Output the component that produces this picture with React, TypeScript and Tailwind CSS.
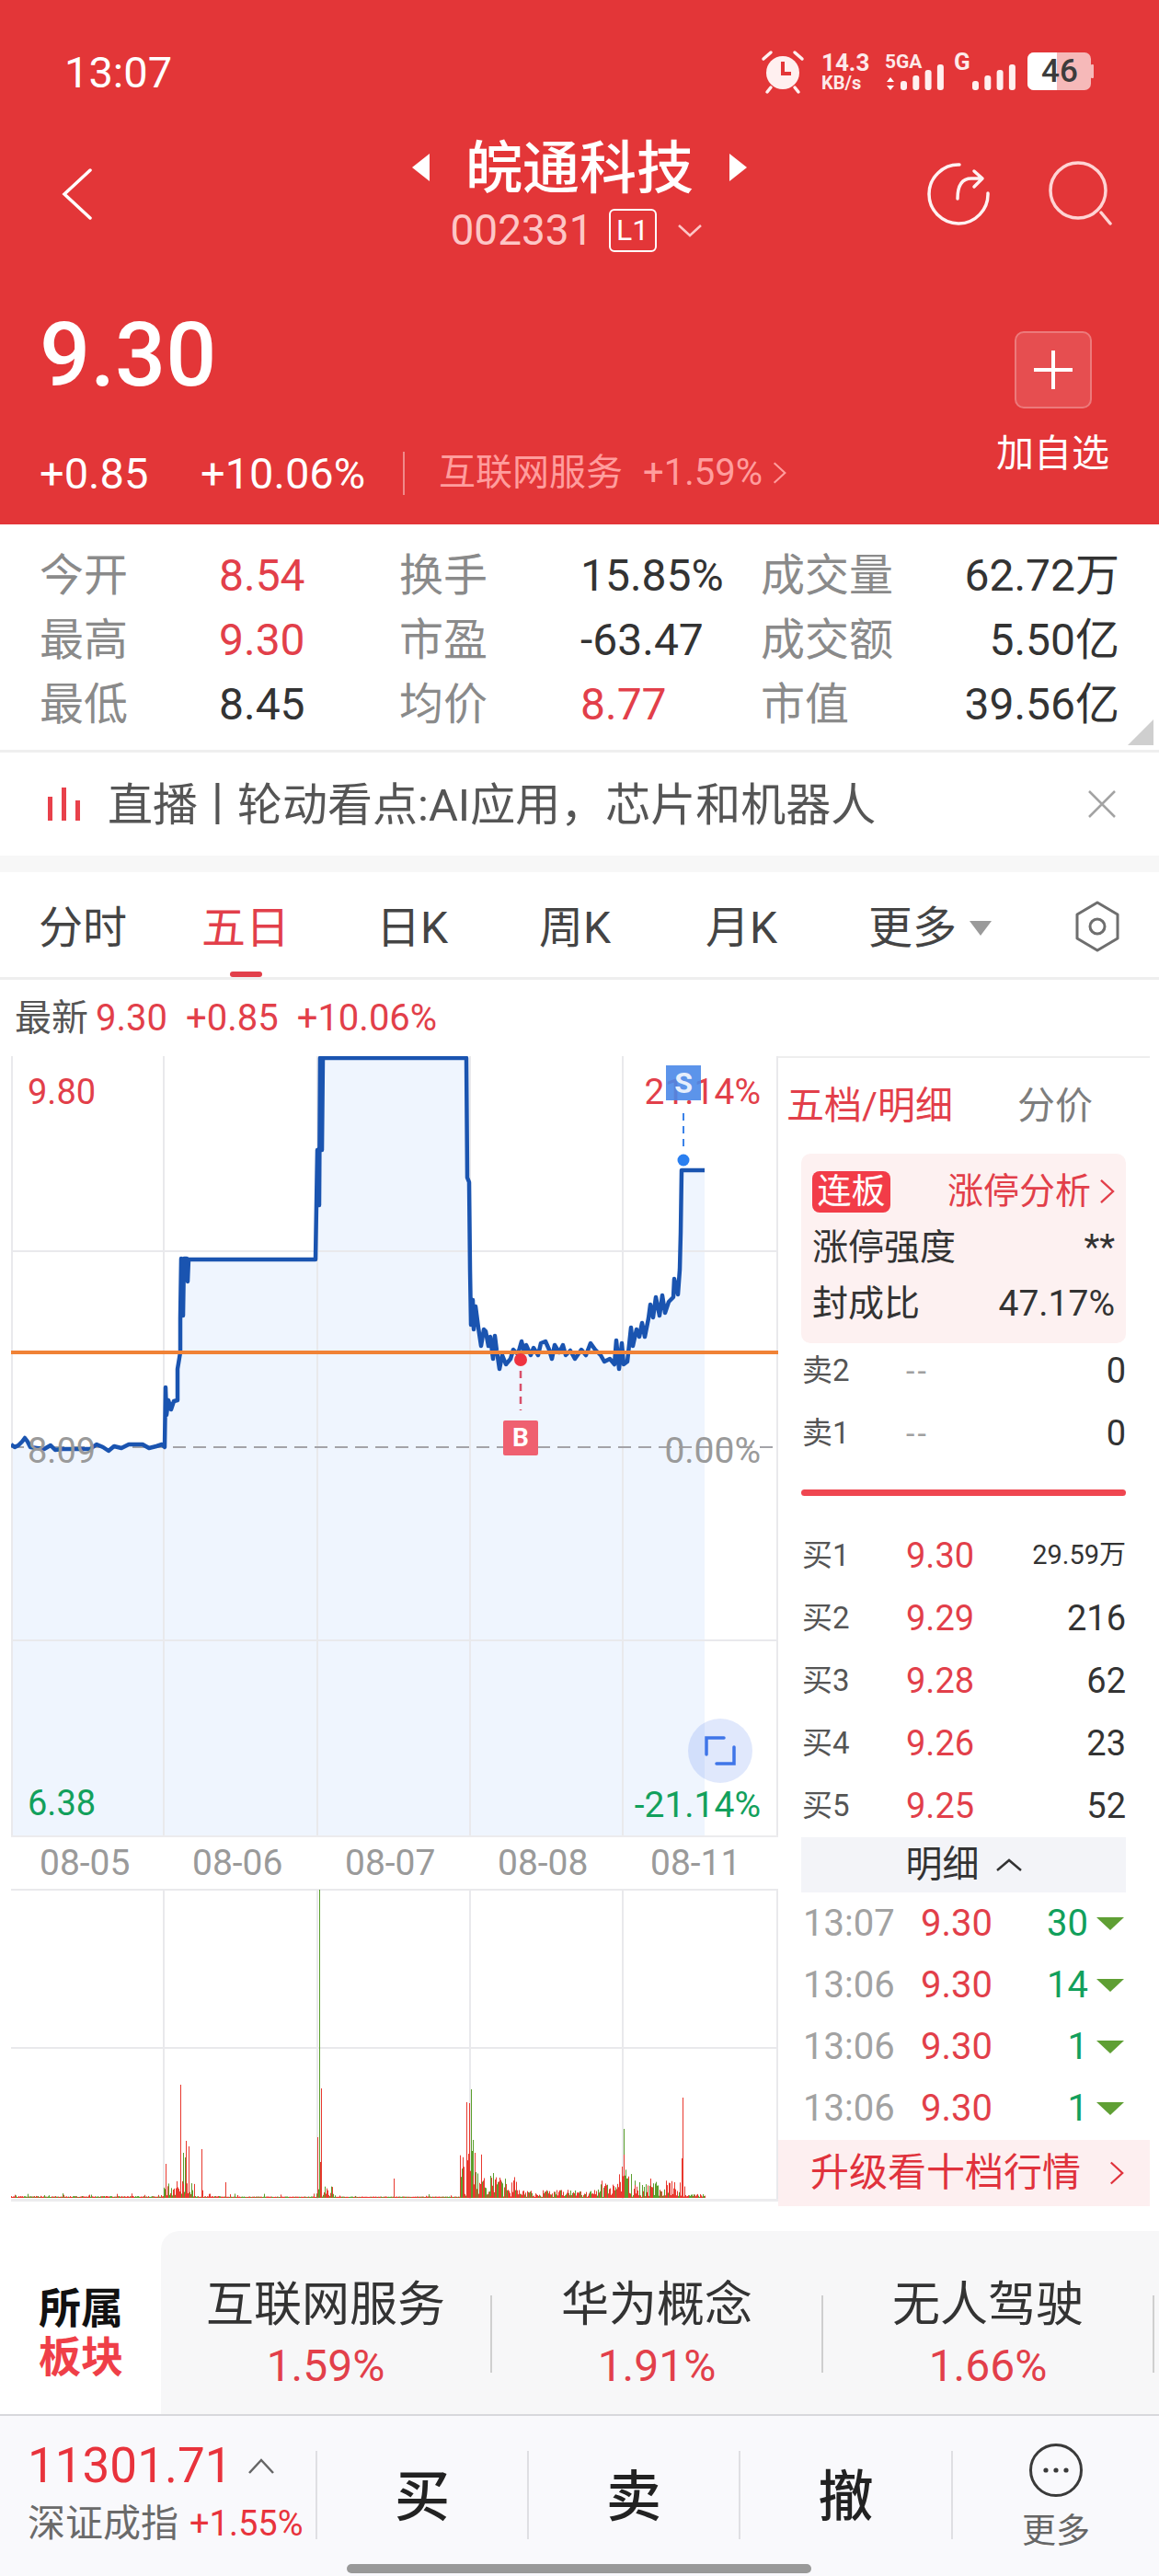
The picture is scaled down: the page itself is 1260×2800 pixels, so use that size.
const linePts: [number, number][] = [
  [12,1570],[16,1573],[20,1571],[24,1567],[27,1563],[30,1567],[33,1573],[40,1574],[48,1575],[55,1571],[60,1576],[68,1575],[78,1575],[88,1575],[98,1575],[105,1570],[112,1573],[118,1577],[124,1572],[132,1574],[140,1570],[155,1570],[162,1574],[170,1572],[176,1570],[179,1573],[180,1508],[181,1538],[183,1522],[186,1532],[189,1523],[193,1522],[193,1488],[196,1470],[196,1432],[197,1368],[199,1430],[200,1368],[203,1368],[204,1393],[205,1369],[343,1369],[345,1250],[347,1310],[348,1150],[350,1250],[351,1150],[507,1150],[508,1280],[510,1285],[511,1380],[512,1440],[514,1413],[515,1445],[517,1420],[520,1443],[523,1463],[526,1445],[528,1447],[531,1463],[533,1453],[536,1477],[538,1452],[540,1468],[543,1488],[546,1473],[550,1483],[555,1477],[558,1467],[563,1472],[567,1458],[570,1470],[572,1462],[577,1473],[580,1465],[585,1473],[588,1460],[593,1458],[597,1467],[600,1477],[603,1462],[608,1470],[612,1462],[615,1473],[620,1468],[625,1477],[632,1467],[637,1473],[642,1460],[647,1467],[653,1473],[657,1480],[663,1477],[668,1483],[670,1457],[673,1488],[676,1460],[678,1483],[682,1480],[686,1443],[688,1463],[692,1445],[695,1453],[698,1438],[701,1453],[705,1433],[707,1418],[710,1432],[713,1410],[717,1430],[720,1408],[723,1427],[727,1415],[732,1410],[733,1390],[737,1407],[739,1380],[740,1340],[741,1272],[766,1272],
];
const lineD = linePts.map((p, i) => `${i ? "L" : "M"}${p[0]} ${p[1]}`).join("");
const fillD = `${lineD}L766 1995L12 1995Z`;

function buildBars() {
  let seed = 17;
  const rnd = () => {
    seed = (seed * 16807) % 2147483647;
    return seed / 2147483647;
  };
  let red = "";
  let green = "";
  const base = 2389;
  const add = (x: number, top: number, g: boolean) => {
    const s = `M${x + 0.5} ${base}V${top}`;
    if (g) green += s;
    else red += s;
  };
  for (let x = 12; x <= 766; x += 1) {
    let amp = 1;
    if (x < 178) amp = rnd() < 0.15 ? 4 : 1;
    else if (x < 212) amp = 18;
    else if (x < 240) amp = rnd() < 0.25 ? 8 : 1;
    else if (x < 344) amp = rnd() < 0.06 ? 4 : 0.5;
    else if (x < 365) amp = 12;
    else if (x < 500) amp = rnd() < 0.04 ? 3 : 0.5;
    else if (x < 525) amp = 50;
    else if (x < 565) amp = 22;
    else if (x < 590) amp = 7;
    else if (x < 650) amp = 8;
    else if (x < 672) amp = 18;
    else if (x < 690) amp = 30;
    else if (x < 745) amp = 20;
    else amp = 4;
    add(x, base - rnd() * amp - 1, rnd() < 0.4);
  }
  ([
    [347,2054,1],[349,2270,0],[345,2323,0],[348,2350,0],[180,2352,0],[196,2266,0],[196,2320,1],[202,2327,0],[205,2333,0],[199,2340,1],[201,2345,1],[219,2336,0],[428,2368,0],[245,2372,0],[507,2285,0],[510,2286,0],[512,2271,1],[514,2326,1],[507,2310,0],[516,2340,0],[533,2365,1],[536,2362,1],[544,2372,1],[678,2314,1],[678,2342,0],[676,2355,0],[742,2280,0],[741,2346,0],[707,2368,0],[690,2375,0],[695,2372,1],[733,2372,0],
  ] as [number, number, number][]).forEach(([x, t, g]) => add(x, t, !!g));
  return { red, green };
}
const bars = buildBars();

const GRID = "#e9e9ec";

function MainChart() {
  return (
    <div className="relative h-[849px] w-[834px]">
      <svg viewBox="12 1148 834 849" className="block h-[849px] w-[834px]">
        <path d={fillD} fill="#eff5fe" />
        <g stroke={GRID} strokeWidth="2" fill="none">
          <path d="M13 1148V1996M178 1148V1996M345 1148V1996M511 1148V1996M677 1148V1996M845 1148V1996" />
          <path d="M12 1360H846M12 1783H846" />
        </g>
        <path d="M12 1996.5H846" stroke="#ececee" strokeWidth="3" />
        <path d="M12 1573H846" stroke="#a3a3a8" strokeWidth="2" strokeDasharray="14 8" />
        <path d={lineD} fill="none" stroke="#1a54b0" strokeWidth="4.5" strokeLinejoin="round" />
        <path d="M11 1470H846" stroke="#f08236" strokeWidth="4" />
        <path d="M743 1210V1252" stroke="#3b82e8" strokeWidth="2" strokeDasharray="8 6" />
        <circle cx="743" cy="1261" r="6.5" fill="#2a7ff0" />
        <path d="M566 1490V1533" stroke="#d8506a" strokeWidth="2.5" strokeDasharray="8 6" />
        <circle cx="566" cy="1478" r="7" fill="#ef3340" />
        <circle cx="783" cy="1903" r="35" fill="#4678f0" fillOpacity="0.17" />
        <path d="M768 1907V1889H787M798 1899V1917H779" fill="none" stroke="#3f75e8" strokeWidth="3.5" strokeLinecap="round" />
      </svg>
      <span className="absolute left-[18px] top-[21px] text-[38px] leading-[36px] text-[#e23f4a]">9.80</span>
      <span className="absolute right-[19px] top-[21px] text-[39px] leading-[36px] text-[#e23f4a]">21.14%</span>
      <div className="absolute left-[712px] top-[10px] flex h-[38px] w-[38px] items-center justify-center bg-[#4a88e8]/90 text-[32px] font-bold leading-none text-[#e6effc]">S</div>
      <span className="absolute left-[18px] top-[411px] text-[38px] leading-[36px] text-[#9a9a9a]">8.09</span>
      <span className="absolute right-[19px] top-[411px] text-[39px] leading-[36px] text-[#9a9a9a]">0.00%</span>
      <div className="absolute left-[535px] top-[396px] flex h-[38px] w-[38px] items-center justify-center rounded-[2px] bg-[#ef6070] text-[28px] font-bold leading-none text-white">B</div>
      <span className="absolute left-[18px] top-[794px] text-[38px] leading-[36px] text-[#12a05c]">6.38</span>
      <span className="absolute right-[19px] top-[796px] text-[39px] leading-[36px] text-[#12a05c]">-21.14%</span>
    </div>
  );
}

function VolChart() {
  return (
    <svg viewBox="12 2053 834 340" className="block h-[340px] w-[834px]">
      <g stroke={GRID} strokeWidth="2" fill="none">
        <path d="M12 2054H846M12 2226H846M178 2054V2392M345 2054V2392M511 2054V2392M677 2054V2392M845 2054V2392" />
      </g>
      <path d="M12 2391.5H846" stroke="#ececee" strokeWidth="3" />
      <path d={bars.green} stroke="#5a9e2c" strokeWidth="1" fill="none" />
      <path d={bars.red} stroke="#e8392f" strokeWidth="1" fill="none" />
    </svg>
  );
}

function Chevron({ className }: { className: string }) {
  return (
    <svg viewBox="0 0 18 30" className={className} fill="none" stroke="currentColor" strokeWidth="2.5">
      <path d="M2 2L16 15L2 28" />
    </svg>
  );
}

function Level({ label, price, value, small }: { label: string; price?: string; value: string; small?: boolean }) {
  return (
    <div className="flex h-[68px] items-center">
      <span className="w-[114px] pl-[1px] text-[33px] text-[#555]">{label}</span>
      {price ? (
        <span className="text-[38px] text-[#e23f4a]">{price}</span>
      ) : (
        <span className="text-[34px] tracking-[3px] text-[#a0a0a0]">--</span>
      )}
      <span className={`ml-auto text-[#333] ${small ? "text-[29px]" : "text-[38px]"}`}>{value}</span>
    </div>
  );
}

function Tick({ time, value }: { time: string; value: string }) {
  return (
    <div className="flex h-[67px] items-center pl-[2px]">
      <span className="w-[128px] text-[40px] text-[#a2a2a2]">{time}</span>
      <span className="text-[40px] text-[#e23f4a]">9.30</span>
      <span className="ml-auto text-[40px] text-[#12a05c]">{value}</span>
      <svg viewBox="0 0 30 14" className="ml-[9px] mr-[2px] h-[14px] w-[30px]">
        <path d="M0 0H30L15 14Z" fill="#5f9f34" />
      </svg>
    </div>
  );
}

function Sector({ name, pct }: { name: string; pct: string }) {
  return (
    <div className="flex w-[358px] flex-col items-center">
      <span className="h-[70px] text-[52px] leading-[70px] text-[#333]">{name}</span>
      <span className="h-[62px] text-[48px] leading-[62px] text-[#e23f4a]">{pct}</span>
    </div>
  );
}

function Stat({ label, value, tone }: { label: string; value: string; tone?: string }) {
  return (
    <>
      <span className="text-[#8a8a8a]">{label}</span>
      <span className={tone ?? "text-[#333]"}>{value}</span>
    </>
  );
}

function Bars({ x }: { x: number }) {
  return (
    <>
      {[88, 82, 76, 70].map((t, i) => (
        <rect key={i} x={x + i * 13.3} y={t} width="7" height={98 - t} rx="3" fill="#fff0f0" />
      ))}
    </>
  );
}

export default function App() {
  return (
    <div className="relative flex h-[2800px] w-[1260px] flex-col overflow-hidden bg-white font-[Roboto,'Noto_Sans_CJK_SC',sans-serif]">
      {/* header */}
      <header className="h-[570px] shrink-0 bg-[#e33638] text-white">
        <div className="flex h-[110px] items-center pt-[46px]">
          <span className="ml-[70px] w-[118px] text-[47px] leading-none">13:07</span>
          <svg viewBox="826 52 370 52" className="ml-[638px] h-[52px] w-[370px]">
            <circle cx="851" cy="79" r="18" fill="#fff0f0" />
            <path d="M851 67V80H860" fill="none" stroke="#e33638" strokeWidth="4" />
            <path d="M830 64L838 57M872 64L864 57M838 95L834 100M864 95L868 100" stroke="#fff0f0" strokeWidth="3.5" strokeLinecap="round" />
            <path d="M968 84L972 89H964ZM968 98L972 93H964Z" fill="white" />
            <Bars x={979} />
            <Bars x={1057} />
            <rect x="1117" y="57" width="69" height="41" rx="7" fill="#f6b9b9" />
            <path d="M1124 57H1149V98H1124A7 7 0 0 1 1117 91V64A7 7 0 0 1 1124 57Z" fill="white" />
            <rect x="1186" y="70" width="3" height="15" rx="1" fill="#f6b9b9" />
          </svg>
          <div className="absolute left-[893px] top-[55px] flex flex-col text-[#fdeaea]">
            <span className="text-[26px] font-bold leading-[26px]">14.3</span>
            <span className="text-[20px] font-bold leading-[19px]">KB/s</span>
          </div>
          <span className="absolute left-[962px] top-[54px] text-[21px] font-bold leading-[26px] text-[#fdeaea]">5GA</span>
          <span className="absolute left-[1037px] top-[52px] text-[26px] font-bold leading-[30px] text-[#fdeaea]">G</span>
          <span className="absolute left-[1132px] top-[59px] text-[35px] font-medium leading-[38px] text-[#3c3c3c]">46</span>
        </div>

        <div className="grid h-[190px] grid-cols-[400px_460px_400px] items-start">
          <svg viewBox="0 0 34 56" className="ml-[67px] mt-[73px] h-[56px] w-[34px]" fill="none" stroke="white" strokeWidth="3.5" strokeLinecap="round">
            <path d="M31 2L3 28L31 54" />
          </svg>
          <div className="flex flex-col items-center pt-[36px]">
            <div className="flex h-[72px] items-center">
              <svg viewBox="0 0 19 30" className="h-[30px] w-[19px]"><path d="M19 0V30L0 15Z" fill="white" /></svg>
              <span className="relative top-[2px] mx-[39px] text-[62px] font-medium leading-[72px]">皖通科技</span>
              <svg viewBox="0 0 19 30" className="h-[30px] w-[19px]"><path d="M0 0V30L19 15Z" fill="white" /></svg>
            </div>
            <div className="mr-[7px] mt-[8px] flex h-[48px] items-center">
              <span className="text-[46px] leading-none text-[#fdc6c6]">002331</span>
              <span className="ml-[17px] flex h-[47px] w-[52px] items-center justify-center rounded-[6px] border-2 border-white text-[32px] leading-none">L1</span>
              <svg viewBox="0 0 28 15" className="ml-[22px] h-[15px] w-[28px]" fill="none" stroke="#fdc6c6" strokeWidth="2.5"><path d="M2 2L14 13L26 2" /></svg>
            </div>
          </div>
          <div className="flex justify-end pr-[50px] pt-[65px]">
            <svg viewBox="1008 174 68 70" className="h-[70px] w-[68px]" fill="none" stroke="#fff2f2" strokeWidth="3.5" strokeLinecap="round" strokeLinejoin="round">
              <path d="M1043 178A32 32 0 1 0 1074 209" />
              <path d="M1041 215C1041 202 1045 193 1056 193H1068M1059 185L1068 193L1059 202" />
            </svg>
            <svg viewBox="1140 174 70 70" className="ml-[64px] h-[70px] w-[70px]" fill="none" stroke="#ffd4d4" strokeWidth="3.5" strokeLinecap="round">
              <circle cx="1172" cy="206" r="30" />
              <path d="M1197 230L1207 242" />
            </svg>
          </div>
        </div>

        <div className="flex h-[270px] justify-between pl-[43px] pr-[53px]">
          <div className="flex flex-col">
            <span className="mt-[32px] h-[108px] text-[97px] font-medium leading-[108px]">9.30</span>
            <div className="mt-[46px] flex h-[56px] items-center">
              <span className="w-[175px] text-[47px] leading-none">+0.85</span>
              <span className="w-[220px] text-[47px] leading-none">+10.06%</span>
              <span className="h-[47px] w-[2px] bg-[#f08a8a]"></span>
              <span className="ml-[37px] text-[40px] leading-none text-[#ff9d9d]">互联网服务</span>
              <span className="ml-[22px] text-[40px] leading-none text-[#ff9d9d]">+1.59%</span>
              <Chevron className="ml-[11px] h-[26px] w-[15px] text-[#ff9d9d]" />
            </div>
          </div>
          <div className="flex w-[125px] flex-col items-center">
            <div className="mt-[60px] flex h-[84px] w-[84px] items-center justify-center rounded-[10px] border-2 border-white/25 bg-white/[0.12]">
              <svg viewBox="0 0 44 44" className="h-[44px] w-[44px]"><path d="M22 1V43M1 22H43" stroke="white" strokeWidth="4" /></svg>
            </div>
            <span className="mt-[24px] text-[41px] leading-[50px]">加自选</span>
          </div>
        </div>
      </header>

      {/* stats */}
      <section className="relative h-[248px] shrink-0 border-b-[3px] border-[#efefef] pl-[43px] pt-[21px]">
        <div className="grid auto-rows-[70px] grid-cols-[195px_196px_197px_196px_150px_240px] items-center text-[48px] leading-none">
          <Stat label="今开" value="8.54" tone="text-[#e23f4a]" />
          <Stat label="换手" value="15.85%" />
          <span className="text-[#8a8a8a]">成交量</span>
          <span className="justify-self-end text-[#333]">62.72万</span>
          <Stat label="最高" value="9.30" tone="text-[#e23f4a]" />
          <Stat label="市盈" value="-63.47" />
          <span className="text-[#8a8a8a]">成交额</span>
          <span className="justify-self-end text-[#333]">5.50亿</span>
          <Stat label="最低" value="8.45" />
          <Stat label="均价" value="8.77" tone="text-[#e23f4a]" />
          <span className="text-[#8a8a8a]">市值</span>
          <span className="justify-self-end text-[#333]">39.56亿</span>
        </div>
        <svg viewBox="0 0 28 28" className="absolute right-[6px] top-[212px] h-[28px] w-[28px]"><path d="M28 0V28H0Z" fill="#cfcfcf" /></svg>
      </section>

      {/* news */}
      <div className="flex h-[112px] shrink-0 items-center pl-[52px] pr-[47px]">
        <svg viewBox="0 0 36 36" className="h-[36px] w-[36px]">
          <path d="M0 10H5V36H0ZM15 0H20V36H15ZM30 14H35V36H30Z" fill="#e8414b" />
        </svg>
        <span className="relative top-[1px] ml-[29px] flex text-[49px] leading-none text-[#555]">
          <span>直播</span>
          <span className="-mx-[3px]">丨</span>
          <span>轮动看点:AI应用，芯片和机器人</span>
        </span>
        <svg viewBox="0 0 30 30" className="ml-auto h-[30px] w-[30px]" fill="none" stroke="#a3a3a3" strokeWidth="2.5"><path d="M1 1L29 29M29 1L1 29" /></svg>
      </div>
      <div className="h-[18px] shrink-0 bg-[#f7f7f7]"></div>

      {/* tabs */}
      <nav className="relative grid h-[117px] shrink-0 grid-cols-[177px_190px_177px_181px_177px_170px_1fr] items-center border-b-[3px] border-[#eeeeee] pl-[42px] pt-[8px] text-[48px] leading-none text-[#444]">
        <span>分时</span>
        <span className="text-[#e23f4a]">五日</span>
        <span>日K</span>
        <span>周K</span>
        <span>月K</span>
        <span className="flex items-center">
          更多
          <svg viewBox="0 0 24 16" className="ml-[14px] h-[16px] w-[24px]"><path d="M0 0H24L12 16Z" fill="#9a9a9a" /></svg>
        </span>
        <svg viewBox="0 0 50 56" className="relative -top-[2px] ml-[54px] h-[56px] w-[50px]" fill="none" stroke="#6e6e6e" strokeWidth="3">
          <path d="M25 2L47 15V41L25 54L3 41V15Z" strokeLinejoin="round" />
          <circle cx="25" cy="28" r="8" />
        </svg>
        <span className="absolute bottom-0 left-[250px] h-[6px] w-[35px] rounded-full bg-[#e23f4a]"></span>
      </nav>

      <div className="flex h-[83px] shrink-0 items-center pl-[16px] text-[40px] leading-none text-[#e23f4a]">
        <span className="text-[#555]">最新</span>
        <span className="ml-[8px]">9.30</span>
        <span className="ml-[20px]">+0.85</span>
        <span className="ml-[20px]">+10.06%</span>
      </div>

      {/* chart + levels */}
      <section className="flex h-[1252px] shrink-0 pl-[12px]">
        <div className="flex w-[834px] flex-col">
          <MainChart />
          <div className="h-[56px] text-[39px] leading-[56px] text-[#9a9a9a]">
            <div className="grid grid-cols-[166px_166px_166px_166px_1fr] pl-[31px]">
              <span>08-05</span>
              <span>08-06</span>
              <span>08-07</span>
              <span>08-08</span>
              <span>08-11</span>
            </div>
          </div>
          <VolChart />
        </div>

        <aside className="flex h-[1252px] w-[404px] flex-col border-t-2 border-[#eeeeee]">
          <div className="flex h-[104px] items-center pl-[9px] text-[41px] leading-none">
            <span className="w-[251px] text-[#e23f4a]">五档/明细</span>
            <span className="text-[#7d7d7d]">分价</span>
          </div>
          <div className="ml-[25px] mr-[26px] flex h-[206px] flex-col rounded-[10px] bg-[#fdf1f1] pl-[12px] pr-[12px] pt-[10px]">
            <div className="flex h-[62px] items-center">
              <span className="flex h-[45px] w-[85px] items-center justify-center rounded-[8px] bg-[#f23c48] text-[37px] leading-none text-white">连板</span>
              <span className="ml-auto text-[39px] leading-none text-[#e23f4a]">涨停分析</span>
              <Chevron className="ml-[9px] h-[28px] w-[17px] text-[#e23f4a]" />
            </div>
            <div className="flex h-[61px] items-center justify-between text-[39px] leading-none text-[#333]">
              <span>涨停强度</span>
              <span>**</span>
            </div>
            <div className="flex h-[61px] items-center justify-between text-[39px] leading-none text-[#333]">
              <span>封成比</span>
              <span>47.17%</span>
            </div>
          </div>
          <div className="ml-[25px] mr-[26px] -mt-[4px] flex flex-col">
            <Level label="卖2" value="0" />
            <Level label="卖1" value="0" />
          </div>
          <div className="ml-[25px] mr-[26px] mt-[27px] h-[7px] rounded-full bg-[#ef4650]"></div>
          <div className="ml-[25px] mr-[26px] mt-[31px] flex flex-col">
            <Level label="买1" price="9.30" value="29.59万" small />
            <Level label="买2" price="9.29" value="216" />
            <Level label="买3" price="9.28" value="62" />
            <Level label="买4" price="9.26" value="23" />
            <Level label="买5" price="9.25" value="52" />
          </div>
          <div className="ml-[25px] mr-[26px] flex h-[60px] shrink-0 items-center justify-center bg-[#f3f4f8] text-[40px] leading-none text-[#333]">
            明细
            <svg viewBox="0 0 28 14" className="ml-[18px] h-[14px] w-[28px]" fill="none" stroke="#333" strokeWidth="2.5"><path d="M1 13L14 2L27 13" /></svg>
          </div>
          <div className="ml-[25px] mr-[26px] h-[269px] shrink-0 overflow-hidden">
            <Tick time="13:07" value="30" />
            <Tick time="13:06" value="14" />
            <Tick time="13:06" value="1" />
            <Tick time="13:06" value="1" />
          </div>
          <div className="flex h-[72px] shrink-0 items-center bg-[#fdeff0] pl-[35px] pr-[28px] text-[42px] leading-none text-[#e0323c]">
            升级看十档行情
            <Chevron className="ml-auto h-[28px] w-[16px]" />
          </div>
        </aside>
      </section>

      {/* sectors */}
      <div className="flex h-[224px] shrink-0 pt-[25px]">
        <div className="flex w-[175px] flex-col pl-[42px] pt-[58px] text-[46px] font-bold leading-[53px]">
          <span className="text-[#111]">所属</span>
          <span className="text-[#ef3f48]">板块</span>
        </div>
        <div className="flex flex-1 items-center overflow-hidden rounded-tl-[20px] bg-[#f7f7f8] pt-[25px]">
          <Sector name="互联网服务" pct="1.59%" />
          <span className="h-[84px] w-[2px] shrink-0 bg-[#cfcfcf]"></span>
          <Sector name="华为概念" pct="1.91%" />
          <span className="h-[84px] w-[2px] shrink-0 bg-[#cfcfcf]"></span>
          <Sector name="无人驾驶" pct="1.66%" />
          <span className="h-[84px] w-[2px] shrink-0 bg-[#cfcfcf]"></span>
        </div>
      </div>

      {/* bottom bar */}
      <footer className="flex flex-1 items-start border-t-2 border-[#d8d8dc] bg-[#f9f9fc]">
        <div className="flex h-[174px] w-[343px] flex-col pl-[30px] pt-[24px]">
          <div className="flex h-[60px] items-center">
            <span className="text-[53px] leading-none text-[#e8333c]">11301.71</span>
            <svg viewBox="0 0 28 17" className="ml-[18px] h-[17px] w-[28px]" fill="none" stroke="#666" strokeWidth="2.5"><path d="M1 16L14 2L27 16" /></svg>
          </div>
          <div className="mt-[8px] flex h-[50px] items-center">
            <span className="text-[41px] leading-none text-[#6a6a6a]">深证成指</span>
            <span className="ml-[12px] text-[38px] leading-none text-[#e8333c]">+1.55%</span>
          </div>
        </div>
        <div className="mt-[38px] h-[96px] w-[2px] bg-[#dfdfe3]"></div>
        <div className="flex h-[178px] w-[228px] items-center justify-center text-[60px] font-medium leading-none text-[#222]">买</div>
        <div className="mt-[38px] h-[96px] w-[2px] bg-[#dfdfe3]"></div>
        <div className="flex h-[178px] w-[228px] items-center justify-center text-[60px] font-medium leading-none text-[#222]">卖</div>
        <div className="mt-[38px] h-[96px] w-[2px] bg-[#dfdfe3]"></div>
        <div className="flex h-[178px] w-[229px] items-center justify-center text-[60px] font-medium leading-none text-[#222]">撤</div>
        <div className="mt-[38px] h-[96px] w-[2px] bg-[#dfdfe3]"></div>
        <div className="flex flex-1 flex-col items-center pt-[29px]">
          <svg viewBox="0 0 60 60" className="h-[60px] w-[60px]" fill="none">
            <circle cx="30" cy="30" r="27.5" stroke="#3a3a3a" strokeWidth="3" />
            <circle cx="19" cy="30" r="2.6" fill="#3a3a3a" />
            <circle cx="30" cy="30" r="2.6" fill="#3a3a3a" />
            <circle cx="41" cy="30" r="2.6" fill="#3a3a3a" />
          </svg>
          <span className="mt-[14px] text-[37px] leading-[46px] text-[#666]">更多</span>
        </div>
      </footer>
      <div className="absolute bottom-[3px] left-[377px] h-[10px] w-[505px] rounded-full bg-[#999999]"></div>
    </div>
  );
}
